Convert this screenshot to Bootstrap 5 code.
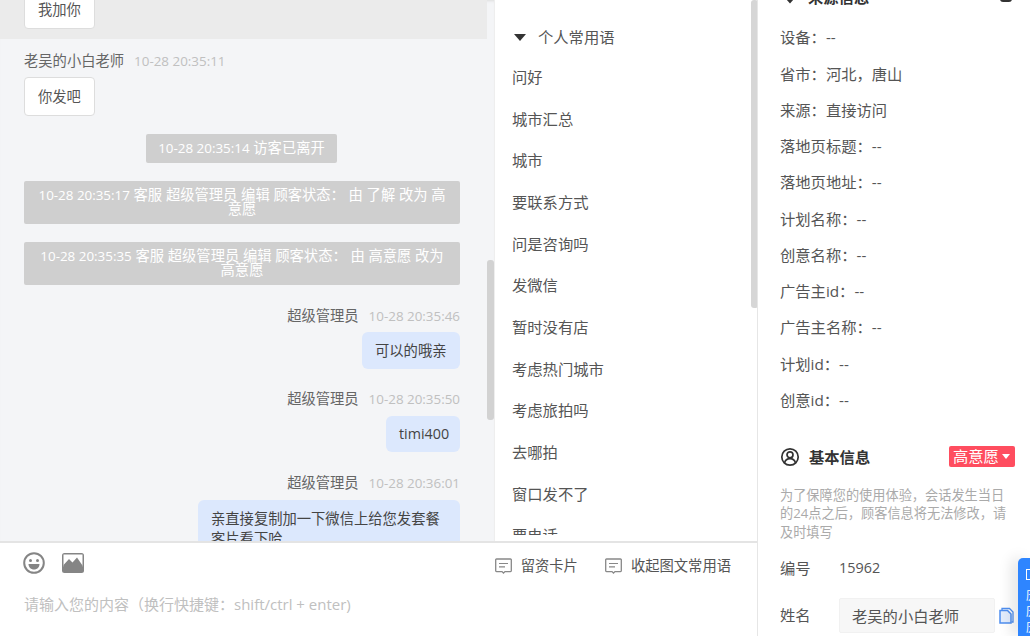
<!DOCTYPE html>
<html lang="zh">
<head>
<meta charset="utf-8">
<title>会话</title>
<link href="https://cdn.jsdelivr.net/npm/bootstrap@5.3.0/dist/css/bootstrap.min.css" rel="stylesheet">
<style>
html,body{height:636px;overflow:hidden}
body{font-family:"Open Sans","Noto Sans CJK SC",sans-serif;font-size:14.3px;color:#555;background:#fff}
.shell{height:636px;width:1030px}
.left-side{width:758px;border-right:1px solid #e6e6e6}
.upper{height:541px}
.chat-col{width:494px;background:#f4f5f7;box-shadow:inset 0 3px 3px -2px #ddd}
.chat-scroll{width:487px}
.bar-track{width:7px}
.bar-thumb-a{margin-top:260px;height:160px;background:#d2d2d2;border-radius:3px}
.hl-block{height:39px;background:#ebebeb;padding:0 24px 10px}
.msg-head{line-height:20px;padding:0 27px 0 24px;margin-top:20.5px}
.first-head{margin-top:12px;margin-bottom:6px}
.msg-name{color:#666}
.msg-time{color:#c0c0c0;margin-left:10px;font-size:13.4px}
.ts{font-size:13.4px}
.bubble-in{margin-left:24px;padding:0 13px;height:39px;width:71px;line-height:37px;background:#fff;border:1px solid #ddd;border-radius:4px;color:#555;white-space:nowrap}
.clip-bubble{margin-left:0}
.bubble-out{margin:6.5px 27px 0 auto;padding:8.75px 13px;line-height:19px;background:#dce8fd;border-radius:6px;color:#444}
.bubble-long{margin-top:7.5px;line-height:20px}
.sys-note{margin:18px 27px 0 24px;padding:7px 14px 8px;background:#cfcfcf;color:#fff;line-height:14px;text-align:center;border-radius:2px}
.sys-short{width:191px;margin:18px 0 0 146px;padding:7px 0 8px}
.phrase-col{width:263px;border-left:1px solid #eee;font-size:15.3px}
.phrase-body{width:256px;height:535px}
.thumb-b{height:308px;background:#d6d6d6;border-radius:3px}
.phrase-title{height:37px;margin-top:19px;margin-bottom:1px;padding-left:19px;line-height:37px;color:#555}
.tri{width:0;height:0;border:6px solid transparent;border-top:7px solid #333;border-bottom:0;margin-right:12px}
.phrase-item{height:41.67px;line-height:41.67px;padding-left:17px;color:#555}
.composer{height:95px;border-top:2px solid #e4e4e4}
.tool-row{padding:2px 26px 0 23px;height:38px}
.img-ic{margin-left:17px}
.act{color:#555;margin-left:27px;margin-top:6px}
.act svg{margin-right:9px}
.place{padding:12px 24px 0;color:#c0c0c0;font-size:15px}
.info-side{width:272px;padding:0 15px 0 22px;font-size:15.3px}
.sect-clip{margin-top:-13px;height:20px;line-height:20px;font-weight:700;color:#333}
.clip-ic{margin-right:3px}
.kv{height:36.25px;line-height:36.25px;color:#555;white-space:nowrap}
.kv-list{margin-top:12.4px}
.sect-title{font-weight:700;color:#333;margin-top:27.6px;line-height:22px}
.ttl-ic{margin-right:9px}
.tag-red{background:#ff4d5f;color:#fff;height:21px;width:66px;line-height:21px;border-radius:2px;padding-left:4px}
.tag-caret{width:0;height:0;border:4px solid transparent;border-top:5px solid #fff;border-bottom:0;margin-left:3px}
.hint{font-size:13.2px;color:#aaa;line-height:18.5px;margin-top:18px}
.row-num{margin-top:15px;line-height:24px}
.num-val{font-size:14.4px}
.row-name{margin-top:18px}
.field-lab{width:59px;flex:none}
.field-box{width:156px;height:35px;line-height:35px;background:#f7f7f7;border:1px solid #f1f1f1;border-radius:2px;padding-left:12px;color:#555;white-space:nowrap}
.float-tab{position:absolute;right:0;top:558px;width:12px;height:78px;background:#2e85ff;border-radius:5px 0 0 0;color:#fff;overflow:hidden;box-shadow:-6px 0 14px rgba(0,0,0,.12);padding:11px 0 0 8px;font-size:11px;line-height:16px;white-space:nowrap}
.float-sq{width:12px;height:11px;border:1px solid #fff;margin-bottom:8px;display:block}
</style>
</head>
<body>
<div class="shell d-flex position-relative overflow-hidden">
  <div class="left-side d-flex flex-column flex-shrink-0">
    <div class="upper d-flex overflow-hidden">
      <div class="chat-col d-flex flex-shrink-0 overflow-hidden">
        <div class="chat-scroll overflow-hidden flex-shrink-0">
          <div class="hl-block d-flex align-items-end overflow-hidden">
            <div class="bubble-in flex-shrink-0 clip-bubble">我加你</div>
          </div>
          <div class="msg-head first-head d-flex"><span class="msg-name">老吴的小白老师</span><span class="msg-time">10-28 20:35:11</span></div>
          <div class="bubble-in">你发吧</div>
          <div class="sys-note sys-short"><span class="ts">10-28 20:35:14</span> 访客已离开</div>
          <div class="sys-note"><span class="ts">10-28 20:35:17</span> 客服 超级管理员 编辑 顾客状态： 由 了解 改为 高意愿</div>
          <div class="sys-note"><span class="ts">10-28 20:35:35</span> 客服 超级管理员 编辑 顾客状态： 由 高意愿 改为 高意愿</div>
          <div class="msg-head d-flex justify-content-end"><span class="msg-name">超级管理员</span><span class="msg-time">10-28 20:35:46</span></div>
          <div class="bubble-out" style="width:98px">可以的哦亲</div>
          <div class="msg-head d-flex justify-content-end"><span class="msg-name">超级管理员</span><span class="msg-time">10-28 20:35:50</span></div>
          <div class="bubble-out" style="width:74px">timi400</div>
          <div class="msg-head d-flex justify-content-end"><span class="msg-name">超级管理员</span><span class="msg-time">10-28 20:36:01</span></div>
          <div class="bubble-out bubble-long" style="width:262px">亲直接复制加一下微信上给您发套餐客片看下哈</div>
        </div>
        <div class="bar-track flex-shrink-0"><div class="bar-thumb-a"></div></div>
      </div>
      <div class="phrase-col d-flex flex-shrink-0 overflow-hidden">
        <div class="phrase-body flex-shrink-0 overflow-hidden">
          <div class="phrase-title d-flex align-items-center"><span class="tri"></span>个人常用语</div>
          <div class="phrase-item">问好</div>
          <div class="phrase-item">城市汇总</div>
          <div class="phrase-item">城市</div>
          <div class="phrase-item">要联系方式</div>
          <div class="phrase-item">问是咨询吗</div>
          <div class="phrase-item">发微信</div>
          <div class="phrase-item">暂时没有店</div>
          <div class="phrase-item">考虑热门城市</div>
          <div class="phrase-item">考虑旅拍吗</div>
          <div class="phrase-item">去哪拍</div>
          <div class="phrase-item">窗口发不了</div>
          <div class="phrase-item">要电话</div>
        </div>
        <div class="bar-track flex-shrink-0"><div class="thumb-b"></div></div>
      </div>
    </div>
    <div class="composer">
      <div class="tool-row d-flex align-items-center">
        <svg width="22" height="22" viewBox="0 0 22 22" fill="none"><circle cx="11" cy="11" r="9.8" stroke="#858585" stroke-width="2"/><circle cx="7.5" cy="8.5" r="1.5" fill="#858585"/><circle cx="14.5" cy="8.5" r="1.5" fill="#858585"/><path d="M5.5 12h11c0 3.4-2.5 5.5-5.5 5.5S5.500 15.400 5.500 12z" fill="#858585"/></svg>
        <svg class="img-ic" width="22" height="20" viewBox="0 0 22 20"><rect width="22" height="20" rx="2.500" fill="#858585"/><rect x="1.500" y="1.500" width="19" height="12" fill="#fff"/><path d="M1.500 12l5.500-6 3.500 3.500L15 4.500l5.500 8v2h-19z" fill="#858585"/></svg>
        <div class="ms-auto d-flex align-items-center">
          <span class="act d-flex align-items-center"><svg width="17" height="16" viewBox="0 0 17 16" fill="none"><path d="M1.500 1h14a.8.8 0 0 1 .8.800v11a.8.8 0 0 1-.8.800H10l-1.500 1.400L7 13.600H1.500a.8.8 0 0 1-.8-.800v-11A.8.8 0 0 1 1.500 1z" stroke="#888" stroke-width="1.300"/><path d="M4 5.500h9M4 8.800h6" stroke="#888" stroke-width="1.200"/></svg>留资卡片</span>
          <span class="act d-flex align-items-center"><svg width="17" height="16" viewBox="0 0 17 16" fill="none"><path d="M1.500 1h14a.8.8 0 0 1 .8.800v11a.8.8 0 0 1-.8.800H10l-1.500 1.400L7 13.600H1.500a.8.8 0 0 1-.8-.800v-11A.8.8 0 0 1 1.500 1z" stroke="#888" stroke-width="1.300"/><path d="M4 5.500h9M4 8.800h6" stroke="#888" stroke-width="1.200"/></svg>收起图文常用语</span>
        </div>
      </div>
      <div class="place">请输入您的内容（换行快捷键：shift/ctrl + enter)</div>
    </div>
  </div>
  <div class="info-side flex-shrink-0">
    <div class="sect-clip d-flex align-items-center">
      <svg class="me-2" width="20" height="20" viewBox="0 0 20 20" fill="none"><path d="M3 7l7 8 7-8-3-4H6z" stroke="#333" stroke-width="2"/></svg>
      <span>来源信息</span>
      <svg class="ms-auto clip-ic" width="12" height="10" viewBox="0 0 12 10" fill="none"><rect x="1" y="-8" width="10" height="17" rx="2" stroke="#333" stroke-width="2"/></svg>
    </div>
    <div class="kv-list">
      <div class="kv">设备：--</div>
      <div class="kv">省市：河北，唐山</div>
      <div class="kv">来源：直接访问</div>
      <div class="kv">落地页标题：--</div>
      <div class="kv">落地页地址：--</div>
      <div class="kv">计划名称：--</div>
      <div class="kv">创意名称：--</div>
      <div class="kv">广告主id：--</div>
      <div class="kv">广告主名称：--</div>
      <div class="kv">计划id：--</div>
      <div class="kv">创意id：--</div>
    </div>
    <div class="sect-title d-flex align-items-center">
      <svg class="ttl-ic flex-shrink-0" width="20" height="20" viewBox="0 0 20 20" fill="none"><circle cx="10" cy="10" r="8.200" stroke="#333" stroke-width="1.700"/><circle cx="10" cy="7.800" r="3" stroke="#333" stroke-width="1.700"/><path d="M4.500 16c.8-3 2.800-4.300 5.500-4.300s4.700 1.300 5.500 4.300" stroke="#333" stroke-width="1.700"/></svg>
      <span>基本信息</span>
      <span class="tag-red ms-auto d-flex align-items-center fw-normal">高意愿<span class="tag-caret"></span></span>
    </div>
    <div class="hint">为了保障您的使用体验，会话发生当日的24点之后，顾客信息将无法修改，请及时填写</div>
    <div class="d-flex row-num"><span class="field-lab">编号</span><span class="num-val">15962</span></div>
    <div class="d-flex align-items-center row-name">
      <span class="field-lab">姓名</span>
      <span class="field-box flex-shrink-0">老吴的小白老师</span>
      <svg class="flex-shrink-0 ms-1" width="15" height="17" viewBox="0 0 15 17" fill="none"><path d="M3 3V1.500h7.500L14 5v10h-1.500" stroke="#4f8ff0" stroke-width="1.300"/><path d="M1 3.500h7.500l3.500 3.500v9H1z" fill="#e3edfd" stroke="#4f8ff0" stroke-width="1.500"/></svg>
    </div>
  </div>
  <div class="float-tab"><span class="float-sq"></span><div>历</div><div>历</div><div>历</div></div>
</div>
<script src="https://cdn.jsdelivr.net/npm/bootstrap@5.3.0/dist/js/bootstrap.bundle.min.js"></script>
</body>
</html>
